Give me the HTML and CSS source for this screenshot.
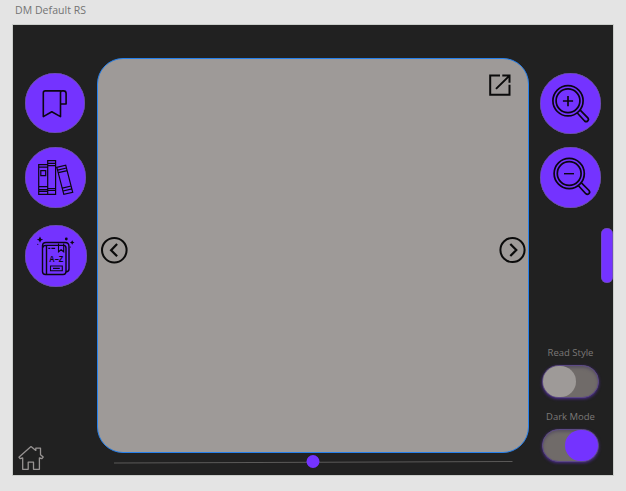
FILE: index.html
```html
<!DOCTYPE html>
<html lang="en">
<head>
<meta charset="utf-8">
<title>DM Default RS</title>
<link rel="stylesheet" href="styles.css">
</head>
<body>
<div class="title">DM Default RS</div>
<main class="artboard">
  <nav class="rail rail-left">
    <button class="round bookmark" aria-label="Bookmark">
      <svg viewBox="25 73 60 60" fill="none" stroke="#0b0612" stroke-width="1.6" stroke-linejoin="round"><path d="M60.8 90.9H45.2q-1.9 0-1.9 2V116.6l8.5-4.9 8.7 4.9V92.9q0-2 1.5-2h1.500q2.600 0 2.600 2.600V104h-5.600"/></svg>
    </button>
    <button class="round books" aria-label="Library">
      <svg viewBox="25 147 61 61" fill="none" stroke="#0b0612" stroke-width="1.200"><path d="M38.700 164.600h9v29.700h-9zM47.700 160.600h7.900v33.700h-7.900zM38.700 167.200h9M38.700 186.600h9M38.700 189.700h9M38.700 191.300h9M40.800 170.700h4.900v5h-4.900zM47.700 163.300h7.900M47.700 165.600h7.900M47.700 188.500h7.900M47.700 190.400h7.900M56.800 167.300l8.900-2.100 7 27.100-8.900 2.100zM57.600 170.100l8.900-2.100M58.400 172.700l8.900-2.100M62.300 188.100l8.900-2.100M63.100 191l8.900-2.100"/></svg>
    </button>
    <button class="round dictionary" aria-label="Dictionary">
      <svg viewBox="25 225 62 62" fill="none" stroke="#0b0612" stroke-width="1.400"><path d="M46 245.400h17.500q2.500 0 2.500 2.500v23.700q0 2.900-2.900 2.900H45.500q-3 0-3-3V246q0-3.500 3.500-3.500h19q4 0 4 4v22.500q0 2.600-3 3M42.700 248q0-2.600 3.300-2.600M46.500 245.500v29"/><path stroke-width="1.100" d="M58.500 243.500v8.300l2.600-2 2.600 2v-8.300M50.500 266h11.800v4.700H50.500zM53 268.400h6.800M48.300 248.400h2M51.400 248.400h3.700"/><path fill="#0b0612" stroke="none" d="M40 236.500q.5 2.700 3.200 3.100-2.700.5-3.200 3.200-.5-2.700-3.200-3.200 2.700-.4 3.200-3.100zM72.200 240.200q.4 2 2.300 2.300-1.900.4-2.300 2.300-.4-1.900-2.300-2.300 1.900-.3 2.300-2.300z"/><g fill="#0b0612" stroke="none"><circle cx="66.300" cy="239" r="1.400"/><circle cx="37.800" cy="244.300" r=".6"/><circle cx="70.500" cy="247" r=".5"/></g><text x="49.300" y="262" class="az" textLength="14" lengthAdjust="spacingAndGlyphs">A–Z</text></svg>
    </button>
    <a class="home" href="#" aria-label="Home">
      <svg viewBox="18 445 27 27" fill="none" stroke="#979392" stroke-width="1.300" stroke-linejoin="round"><path d="M31 446.600L18.900 457.200l1.200 1.500 2.600-.7v11.300h5.500v-7.200h5.300v7.200h5.900V458l2.500.6 1.300-1.500-2.700-2.300v-6.700h-4.700v2.300z"/></svg>
    </a>
  </nav>
  <section class="center">
    <div class="page">
      <div class="tools">
        <svg class="open" viewBox="488 73 24 24" fill="none" stroke="#0b0b0b" stroke-width="2"><path d="M500 75.600h-9.800v19.200h19.300V84.700"/><path d="M496 88.900l13-12.800M502.300 75.600h7.200v7.100"/></svg>
      </div>
      <div class="pager">
        <svg class="arrow" viewBox="0 0 28 28" fill="none" stroke="#0b0b0b" stroke-width="2"><circle cx="14.300" cy="14.200" r="12.300"/><path stroke-width="2.200" d="M17.100 8.100L11.100 14.200l6 6.100"/></svg>
        <svg class="arrow" viewBox="0 0 28 28" fill="none" stroke="#0b0b0b" stroke-width="2"><circle cx="14.500" cy="14" r="12.100"/><path stroke-width="2.200" d="M12.300 7.900L18.300 14l-6 6.100"/></svg>
      </div>
    </div>
    <svg class="slider" viewBox="97 453 432 18"><path d="M114 463L512.500 461.500" stroke="#5b5a59" stroke-width="1.100"/><circle cx="313" cy="461.500" r="6.500" fill="#7433ff"/></svg>
  </section>
  <aside class="rail rail-right">
    <button class="round zoom-in" aria-label="Zoom in">
      <svg viewBox="540 73 61 61" fill="none" stroke="#0b0612" stroke-width="1.700"><circle cx="568" cy="100.800" r="15.100"/><circle cx="568" cy="100.800" r="11.900"/><path d="M568 96v10.200M562.900 101h10.200" stroke-width="1.700"/><path d="M577.300 113l7.300 8q1.500 1.300 3.100 0 1.500-1.500.1-3.200l-7.600-7.700"/></svg>
    </button>
    <button class="round zoom-out" aria-label="Zoom out">
      <svg viewBox="540 147 61 61" fill="none" stroke="#0b0612" stroke-width="1.700"><circle cx="569.200" cy="173.500" r="15.100"/><circle cx="569.200" cy="173.500" r="11.900"/><path d="M564 173.700h10" stroke-width="1.400"/><path d="M578.500 185.700l7.300 8q1.500 1.300 3.100 0 1.500-1.500.1-3.200l-7.600-7.700"/></svg>
    </button>
    <div class="scrollbar"></div>
    <div class="settings">
      <div class="label">Read Style</div>
      <div class="toggle"><span class="knob"></span></div>
      <div class="label second">Dark Mode</div>
      <div class="toggle on"><span class="knob"></span></div>
    </div>
  </aside>
</main>
</body>
</html>
```
FILE: styles.css
```css
* { box-sizing: border-box; }
body {
  margin: 0;
  height: 491px;
  overflow: hidden;
  background: #e4e4e4;
  font-family: "Open Sans", "Noto Sans", sans-serif;
}
svg { display: block; }
.title {
  height: 25px;
  padding: 2px 0 0 15px;
  font-size: 10.5px;
  letter-spacing: .05px;
  line-height: 16px;
  color: #737373;
  white-space: nowrap;
}
.artboard {
  width: 600px;
  height: 450px;
  margin-left: 13px;
  display: grid;
  grid-template-columns: 84px 432px 84px;
  background: #212121;
  box-shadow: 0 0 0 1px #cacdca;
}
.rail { display: flex; flex-direction: column; align-items: flex-start; }
.rail-left { padding: 48px 0 0 12px; }
.rail-right { padding: 48px 0 0 11px; }
.round {
  flex: none;
  padding: 0;
  border: 0;
  border-radius: 50%;
  background: #7433ff;
  box-shadow: inset 0 0 0 .6px #6a5a90;
}
.round svg { width: 100%; height: 100%; }
.bookmark { width: 60px; height: 60px; }
.books { width: 61px; height: 61px; margin-top: 14px; }
.dictionary { width: 62px; height: 62px; margin-top: 17px; }
.az {
  font: 700 9px "Liberation Sans", sans-serif;
  fill: #0b0612;
  stroke: none;
}
.home { margin: 158px 0 0 -7px; }
.home svg { width: 27px; height: 27px; }
.center { padding-top: 33px; }
.page {
  height: 395px;
  display: flex;
  flex-direction: column;
  border: 1px solid #2680eb;
  border-radius: 26px;
  background: #9e9a98;
}
.tools { display: flex; justify-content: flex-end; padding: 14px 16px 0 0; }
.open { width: 24px; height: 24px; }
.pager { display: flex; justify-content: space-between; margin-top: 139px; padding: 0 2px; }
.arrow { width: 28px; height: 28px; }
.slider { width: 432px; height: 18px; }
.zoom-in { width: 61px; height: 61px; }
.zoom-out { width: 61px; height: 61px; margin-top: 13px; }
.scrollbar {
  align-self: flex-end;
  width: 12px;
  height: 55px;
  margin-top: 20px;
  border-radius: 6px;
  background: #7433ff;
  box-shadow: inset 0 0 0 .5px #6a5a90;
}
.settings {
  width: 61px;
  margin-top: 63px;
  display: flex;
  flex-direction: column;
  align-items: center;
}
.label {
  height: 14px;
  font-size: 9.500px;
  line-height: 14px;
  color: #7c7978;
  white-space: nowrap;
}
.toggle {
  width: 57px;
  height: 33px;
  margin-top: 5px;
  display: flex;
  border: 1px solid #5c4a84;
  border-radius: 17px;
  background: #706b69;
  box-shadow: 0 1px 3px #4a2a8c, inset 0 2px 3px #5a5362;
}
.second { margin-top: 12px; }
.knob {
  width: 33px;
  height: 31px;
  border-radius: 16px;
  background: #9e9a98;
}
.on { justify-content: flex-end; }
.on .knob { background: #7433ff; }
```
